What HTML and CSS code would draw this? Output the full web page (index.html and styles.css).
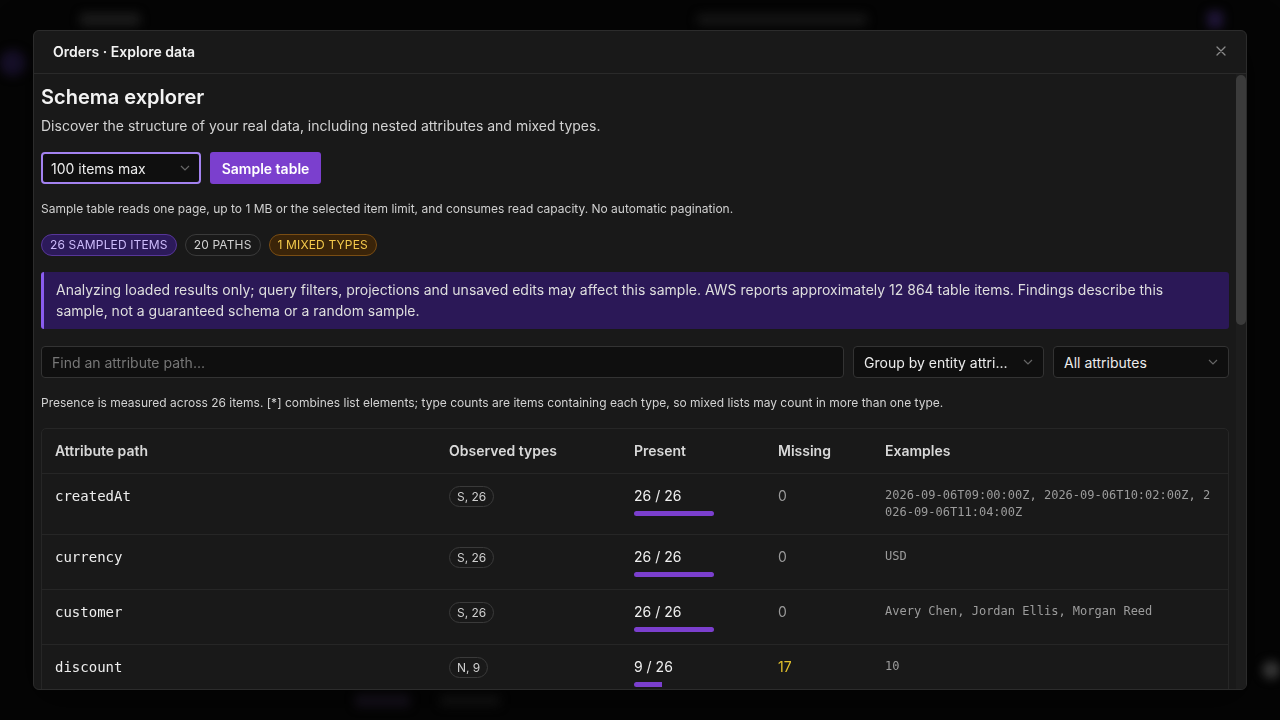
FILE: index.html
```html
<!DOCTYPE html>
<html lang="en">
<head>
    <meta charset="UTF-8">
    <meta name="viewport" content="width=device-width, initial-scale=1.0">
    <title>Orders · Explore data</title>
    <link rel="stylesheet" href="styles.css">
</head>
<body>

<div class="app-backdrop">
    <div class="app-top">
        <span class="ghost ghost-tab"></span>
        <span class="ghost ghost-title"></span>
        <span class="ghost ghost-avatar"></span>
    </div>
    <div class="app-side-glow"></div>
    <div class="app-bottom">
        <span class="ghost ghost-btn"></span>
        <span class="ghost ghost-btn-alt"></span>
        <span class="ghost ghost-corner"></span>
    </div>
</div>

<div class="overlay">
    <div class="dialog">
        <div class="dialog-header">
            <h2>Orders · Explore data</h2>
            <button class="close-btn" aria-label="Close">
                <svg width="10" height="10" viewBox="0 0 10 10"><path d="M1 1l8 8M9 1l-8 8" stroke="currentColor" stroke-width="1.3" stroke-linecap="round"/></svg>
            </button>
        </div>
        <div class="dialog-main">
            <div class="dialog-body">
                <h1 class="explorer-title">Schema explorer</h1>
                <p class="explorer-sub">Discover the structure of your real data, including nested attributes and mixed types.</p>

                <div class="sample-row">
                    <div class="select select-focus">
                        <span>100 items max</span>
                        <svg class="chevron" width="10" height="6" viewBox="0 0 10 6"><path d="M1 1l4 4 4-4" fill="none" stroke="currentColor" stroke-width="1.2"/></svg>
                    </div>
                    <button class="btn-primary">Sample table</button>
                </div>

                <p class="hint">Sample table reads one page, up to 1 MB or the selected item limit, and consumes read capacity. No automatic pagination.</p>

                <div class="badges">
                    <span class="badge badge-purple">26 SAMPLED ITEMS</span>
                    <span class="badge">20 PATHS</span>
                    <span class="badge badge-amber">1 MIXED TYPES</span>
                </div>

                <div class="notice">
                    Analyzing loaded results only; query filters, projections and unsaved edits may affect this sample. AWS reports approximately 12 864 table items. Findings describe this sample, not a guaranteed schema or a random sample.
                </div>

                <div class="filters">
                    <div class="search">Find an attribute path...</div>
                    <div class="select select-group">
                        <span>Group by entity attri...</span>
                        <svg class="chevron" width="10" height="6" viewBox="0 0 10 6"><path d="M1 1l4 4 4-4" fill="none" stroke="currentColor" stroke-width="1.2"/></svg>
                    </div>
                    <div class="select select-attrs">
                        <span>All attributes</span>
                        <svg class="chevron" width="10" height="6" viewBox="0 0 10 6"><path d="M1 1l4 4 4-4" fill="none" stroke="currentColor" stroke-width="1.2"/></svg>
                    </div>
                </div>

                <p class="presence">Presence is measured across 26 items. [*] combines list elements; type counts are items containing each type, so mixed lists may count in more than one type.</p>

                <div class="schema-table">
                    <table>
                        <colgroup>
                            <col class="col-path">
                            <col class="col-types">
                            <col class="col-present">
                            <col class="col-missing">
                            <col>
                        </colgroup>
                        <thead>
                            <tr>
                                <th>Attribute path</th>
                                <th>Observed types</th>
                                <th>Present</th>
                                <th>Missing</th>
                                <th>Examples</th>
                            </tr>
                        </thead>
                        <tbody id="schema-rows">
                        </tbody>
                    </table>
                </div>
            </div>
            <div class="scroll-rail"><div class="scroll-thumb"></div></div>
        </div>
    </div>
</div>

<script>
    const sampled = 26;
    const attributes = [
        { path: "createdAt", types: ["S, 26"], present: 26, examples: "2026-09-06T09:00:00Z, 2026-09-06T10:02:00Z, 2026-09-06T11:04:00Z" },
        { path: "currency", types: ["S, 26"], present: 26, examples: "USD" },
        { path: "customer", types: ["S, 26"], present: 26, examples: "Avery Chen, Jordan Ellis, Morgan Reed" },
        { path: "discount", types: ["N, 9"], present: 9, examples: "10" }
    ];

    function renderRows(list) {
        const body = document.getElementById("schema-rows");
        list.forEach(attr => {
            const missing = sampled - attr.present;
            const row = document.createElement("tr");
            row.innerHTML = `
                <td class="path">${attr.path}</td>
                <td>${attr.types.map(t => `<span class="type-chip">${t}</span>`).join(" ")}</td>
                <td>
                    <div class="present-count">${attr.present} / ${sampled}</div>
                    <div class="present-track"><div class="present-fill" style="width: ${(attr.present / sampled * 100).toFixed(1)}%"></div></div>
                </td>
                <td class="${missing > 0 ? "missing missing-warn" : "missing"}">${missing}</td>
                <td class="examples">${attr.examples}</td>
            `;
            body.appendChild(row);
        });
    }

    renderRows(attributes);
</script>

</body>
</html>
```

FILE: styles.css
```css
html, body {
    height: 100%;
}
body {
    margin: 0;
    background: #050505;
    font-family: Inter, "Noto Sans", sans-serif;
    color: #e8e8e8;
    overflow: hidden;
}

/* blurred app behind the modal */
.app-backdrop {
    height: 100%;
    display: flex;
    flex-direction: column;
    filter: blur(5px);
}
.app-top {
    display: flex;
    align-items: center;
    height: 40px;
    padding-left: 80px;
}
.ghost {
    display: block;
    border-radius: 4px;
}
.ghost-tab {
    width: 60px;
    height: 14px;
    background: #1c1c1c;
}
.ghost-title {
    width: 170px;
    height: 12px;
    margin-left: 557px;
    background: #161616;
}
.ghost-avatar {
    width: 16px;
    height: 18px;
    margin-left: 340px;
    background: #21173a;
}
.app-side-glow {
    width: 26px;
    height: 26px;
    margin-top: 10px;
    background: #17102a;
    border-radius: 50%;
}
.app-bottom {
    display: flex;
    align-items: center;
    height: 40px;
    margin-top: auto;
    padding-left: 355px;
}
.ghost-btn {
    width: 55px;
    height: 14px;
    background: #18131f;
}
.ghost-btn-alt {
    width: 60px;
    height: 12px;
    margin-left: 30px;
    background: #141414;
}
.ghost-corner {
    width: 18px;
    height: 18px;
    margin-left: auto;
    margin-top: -60px;
    background: #3a3a3a;
    border-radius: 50%;
}

.overlay {
    position: fixed;
    inset: 0;
    display: flex;
    align-items: center;
    justify-content: center;
}

.dialog {
    width: 1214px;
    height: 660px;
    box-sizing: border-box;
    background: #191919;
    border: 1px solid #2c2c2c;
    border-radius: 6px;
    display: flex;
    flex-direction: column;
    overflow: hidden;
    box-shadow: 0 10px 40px rgba(0, 0, 0, 0.6);
}
.dialog-header {
    height: 43px;
    box-sizing: border-box;
    flex: none;
    display: flex;
    align-items: center;
    justify-content: space-between;
    padding: 0 20px 2px 19px;
    border-bottom: 1px solid #2a2a2a;
}
.dialog-header h2 {
    margin: 0;
    font-size: 14px;
    font-weight: 600;
    color: #f2f2f2;
}
.close-btn {
    background: none;
    border: none;
    padding: 0;
    color: #8a8a8a;
    display: flex;
}

.dialog-main {
    flex: 1;
    min-height: 0;
    display: flex;
}
.dialog-body {
    flex: 1;
    min-width: 0;
    overflow: hidden;
    padding: 11px 7px 16px 7px;
}
.scroll-rail {
    width: 10px;
    flex: none;
    padding-top: 1px;
    background: #1d1d1d;
}
.scroll-thumb {
    height: 250px;
    border-radius: 5px;
    background: #3b3b3b;
}

.explorer-title {
    margin: 0;
    font-size: 20px;
    line-height: 24px;
    font-weight: 600;
    color: #f3f3f3;
}
.explorer-sub {
    margin: 7px 0 0;
    font-size: 14px;
    line-height: 20px;
    color: #d2d2d2;
}

.sample-row {
    display: flex;
    gap: 9px;
    margin-top: 16px;
}
.select {
    height: 32px;
    box-sizing: border-box;
    display: flex;
    align-items: center;
    justify-content: space-between;
    padding: 0 10px;
    background: #0f0f0f;
    border: 1px solid #333;
    border-radius: 4px;
    font-size: 14px;
    color: #ececec;
}
.chevron {
    color: #666;
}
.select-focus {
    width: 160px;
    border: 2px solid #a382f0;
    padding: 0 9px 0 8px;
}
.btn-primary {
    height: 32px;
    width: 111px;
    border: none;
    border-radius: 3px;
    background: #7b3fce;
    color: #fff;
    font-family: inherit;
    font-size: 14px;
    font-weight: 600;
}

.hint {
    margin: 17px 0 0;
    font-size: 12px;
    line-height: 16px;
    color: #d0d0d0;
}

.badges {
    display: flex;
    gap: 8px;
    margin-top: 17px;
}
.badge {
    height: 22px;
    box-sizing: border-box;
    display: inline-flex;
    align-items: center;
    padding: 0 8px 1px;
    border: 1px solid #3a3a3a;
    border-radius: 11px;
    font-size: 12px;
    letter-spacing: 0.012em;
    color: #d0d0d0;
}
.badge-purple {
    background: #2c1a5a;
    border-color: #573699;
    color: #cdbbfb;
}
.badge-amber {
    background: #3a2409;
    border-color: #7a4d13;
    color: #f3c94b;
}

.notice {
    margin-top: 16px;
    padding: 8px 12px;
    background: #2b1857;
    border-left: 3px solid #8a5cf0;
    border-radius: 3px;
    font-size: 14px;
    line-height: 20.5px;
    color: #dedede;
}

.filters {
    display: flex;
    gap: 9px;
    margin-top: 17px;
}
.search {
    flex: 1;
    height: 32px;
    box-sizing: border-box;
    display: flex;
    align-items: center;
    padding: 0 10px;
    background: #0f0f0f;
    border: 1px solid #333;
    border-radius: 4px;
    font-size: 14px;
    color: #777;
}
.select-group {
    width: 191px;
}
.select-attrs {
    width: 176px;
}

.presence {
    margin: 17px 0 0;
    font-size: 12px;
    line-height: 16px;
    color: #d2d2d2;
}

.schema-table {
    margin-top: 17px;
    border: 1px solid #262626;
    border-radius: 5px;
    overflow: hidden;
}
.schema-table table {
    width: 100%;
    border-collapse: collapse;
    table-layout: fixed;
}
.col-path { width: 394px; }
.col-types { width: 185px; }
.col-present { width: 144px; }
.col-missing { width: 107px; }

.schema-table th {
    text-align: left;
    padding: 12px 13px;
    font-size: 14px;
    line-height: 20px;
    font-weight: 600;
    color: #d8d8d8;
    border-bottom: 1px solid #262626;
}
.schema-table td {
    padding: 12px 13px;
    vertical-align: top;
    font-size: 14px;
    line-height: 20px;
    border-bottom: 1px solid #262626;
}
.schema-table tbody tr:last-child td {
    border-bottom: none;
}
.path {
    font-family: "DejaVu Sans Mono", monospace;
    color: #ededed;
}
.type-chip {
    display: inline-flex;
    align-items: center;
    height: 21px;
    box-sizing: border-box;
    padding: 0 7px;
    border: 1px solid #3a3a3a;
    border-radius: 11px;
    font-size: 12px;
    color: #cfcfcf;
    vertical-align: top;
}
.present-count {
    color: #efefef;
}
.present-track {
    width: 80px;
    height: 5px;
    margin-top: 5px;
    border-radius: 3px;
    overflow: hidden;
}
.present-fill {
    height: 100%;
    background: #7b3fce;
}
.missing {
    color: #9a9a9a;
}
.missing-warn {
    color: #e3c12c;
}
.schema-table td.examples {
    padding-top: 13px;
    padding-bottom: 13px;
    font-family: "DejaVu Sans Mono", monospace;
    font-size: 12px;
    line-height: 17px;
    color: #9c9c9c;
    word-break: break-all;
}
```
